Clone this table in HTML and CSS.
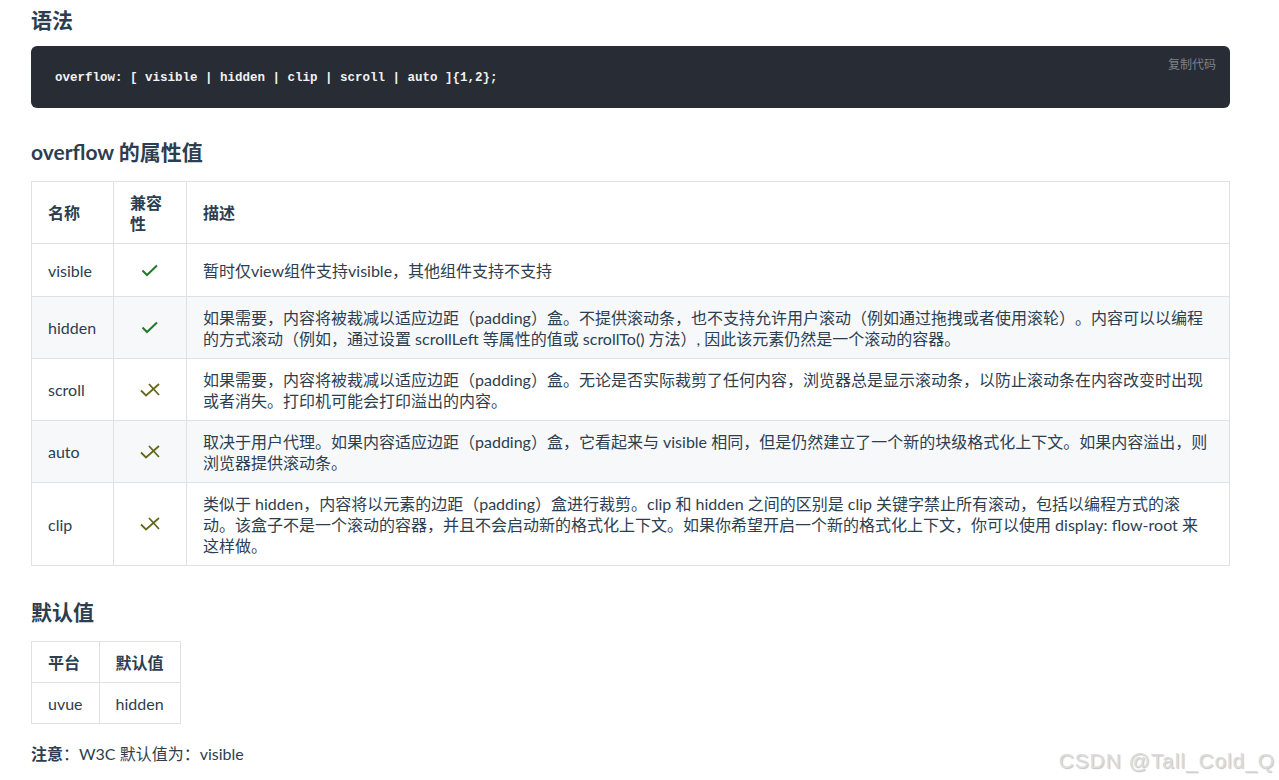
FILE: index.html
```html
<!DOCTYPE html>
<html lang="zh-CN">
<head>
<meta charset="utf-8">
<title>overflow</title>
<link rel="stylesheet" href="styles.css">
</head>
<body>
<main class="content">
  <h2 class="title title-first">语法</h2>
  <div class="code-block">
    <span class="copy">复制代码</span>
    <pre class="code">overflow: [ visible | hidden | clip | scroll | auto ]{1,2};</pre>
  </div>

  <h2 class="title">overflow 的属性值</h2>
  <table class="tbl tbl-wide">
    <colgroup><col class="c-name"><col class="c-compat"><col></colgroup>
    <thead>
      <tr><th>名称</th><th>兼容性</th><th class="desc">描述</th></tr>
    </thead>
    <tbody>
      <tr>
        <td>visible</td>
        <td><span class="ico"><svg width="18" height="13" viewBox="0 0 18 13"><path d="M1.5 6.5 L6 11 L16 1.5" fill="none" stroke="#237a2e" stroke-width="2"/></svg></span></td>
        <td class="desc">暂时仅view组件支持visible，其他组件支持不支持</td>
      </tr>
      <tr>
        <td>hidden</td>
        <td><span class="ico"><svg width="18" height="13" viewBox="0 0 18 13"><path d="M1.5 6.5 L6 11 L16 1.5" fill="none" stroke="#237a2e" stroke-width="2"/></svg></span></td>
        <td class="desc">如果需要，内容将被裁减以适应边距（padding）盒。不提供滚动条，也不支持允许用户滚动（例如通过拖拽或者使用滚轮）。内容可以以编程的方式滚动（例如，通过设置 scrollLeft 等属性的值或 scrollTo() 方法）, 因此该元素仍然是一个滚动的容器。</td>
      </tr>
      <tr>
        <td>scroll</td>
        <td><span class="ico"><svg width="20" height="14" viewBox="0 0 20 14"><path d="M1 7.5 L6 12.5 L19 1 M9 1 L19 12" fill="none" stroke="#64691a" stroke-width="1.8"/></svg></span></td>
        <td class="desc">如果需要，内容将被裁减以适应边距（padding）盒。无论是否实际裁剪了任何内容，浏览器总是显示滚动条，以防止滚动条在内容改变时出现或者消失。打印机可能会打印溢出的内容。</td>
      </tr>
      <tr>
        <td>auto</td>
        <td><span class="ico"><svg width="20" height="14" viewBox="0 0 20 14"><path d="M1 7.5 L6 12.5 L19 1 M9 1 L19 12" fill="none" stroke="#64691a" stroke-width="1.8"/></svg></span></td>
        <td class="desc">取决于用户代理。如果内容适应边距（padding）盒，它看起来与 visible 相同，但是仍然建立了一个新的块级格式化上下文。如果内容溢出，则浏览器提供滚动条。</td>
      </tr>
      <tr>
        <td>clip</td>
        <td><span class="ico"><svg width="20" height="14" viewBox="0 0 20 14"><path d="M1 7.5 L6 12.5 L19 1 M9 1 L19 12" fill="none" stroke="#64691a" stroke-width="1.8"/></svg></span></td>
        <td class="desc">类似于 hidden，内容将以元素的边距（padding）盒进行裁剪。clip 和 hidden 之间的区别是 clip 关键字禁止所有滚动，包括以编程方式的滚动。该盒子不是一个滚动的容器，并且不会启动新的格式化上下文。如果你希望开启一个新的格式化上下文，你可以使用 display: flow-root 来这样做。</td>
      </tr>
    </tbody>
  </table>

  <h2 class="title">默认值</h2>
  <table class="tbl tbl-small">
    <thead>
      <tr><th>平台</th><th>默认值</th></tr>
    </thead>
    <tbody>
      <tr><td>uvue</td><td>hidden</td></tr>
    </tbody>
  </table>

  <p class="note"><strong>注意</strong>：W3C 默认值为：visible</p>
</main>
<div class="watermark">CSDN @Tall_Cold_Q</div>
</body>
</html>
```

FILE: styles.css
```css
* { box-sizing: border-box; }

html, body {
  margin: 0;
  padding: 0;
  background: #ffffff;
}

body {
  font-family: Lato, "Noto Sans CJK SC", sans-serif;
  font-size: 16px;
  color: #2c3e50;
  width: 1279px;
  height: 780px;
  overflow: hidden;
  position: relative;
  text-spacing-trim: space-all;
}

.content {
  padding: 0 49px 0 31px;
}

.title {
  font-size: 21px;
  font-weight: 700;
  line-height: 28px;
  margin: 0;
  color: #2c3e50;
}

.title-first {
  padding-top: 6px;
  margin-bottom: 12px;
}

.code-block {
  background: #282c34;
  border-radius: 6px;
  height: 62px;
  position: relative;
  margin-bottom: 30px;
  display: flex;
  align-items: center;
  padding: 0 24px;
}

.copy {
  position: absolute;
  right: 14px;
  top: 11px;
  font-size: 12px;
  line-height: 14px;
  color: #7d8288;
  font-family: "Noto Sans CJK SC", sans-serif;
}

.code {
  margin: 0;
  padding-top: 1px;
  font-family: "Liberation Mono", "DejaVu Sans Mono", monospace;
  font-size: 12.5px;
  line-height: 18px;
  font-weight: 700;
  color: #f2f2f2;
}

.tbl {
  border-collapse: collapse;
  margin-top: 15px;
}

.tbl-wide {
  width: 1199px;
  margin-bottom: 32px;
}

.c-name { width: 82px; }
.c-compat { width: 73px; }

.tbl th,
.tbl td {
  border: 1px solid #dfe2e5;
  padding: 9.5px 16px;
  line-height: 21px;
  text-align: left;
  vertical-align: middle;
}

.tbl th {
  font-weight: 700;
}

.tbl .desc {
  padding-right: 18px;
}

.tbl-wide th:nth-child(2) {
  padding-right: 24px;
}

.tbl tbody tr:nth-child(2n) {
  background: #f6f8fa;
}

.ico {
  display: flex;
  align-items: center;
  justify-content: center;
  height: 33px;
  padding-right: 1px;
}

.ico svg {
  display: block;
}

.tbl-small {
  margin-bottom: 20px;
}

.note {
  margin: 0;
  line-height: 20px;
}

.note strong {
  font-weight: 700;
}

.watermark {
  position: absolute;
  right: 4px;
  bottom: 7px;
  font-family: "Liberation Sans", Arial, sans-serif;
  font-size: 21px;
  color: #dcdcdc;
  text-shadow: 1px 1px 1px #c4c4c4;
  letter-spacing: 0.9px;
}
```
